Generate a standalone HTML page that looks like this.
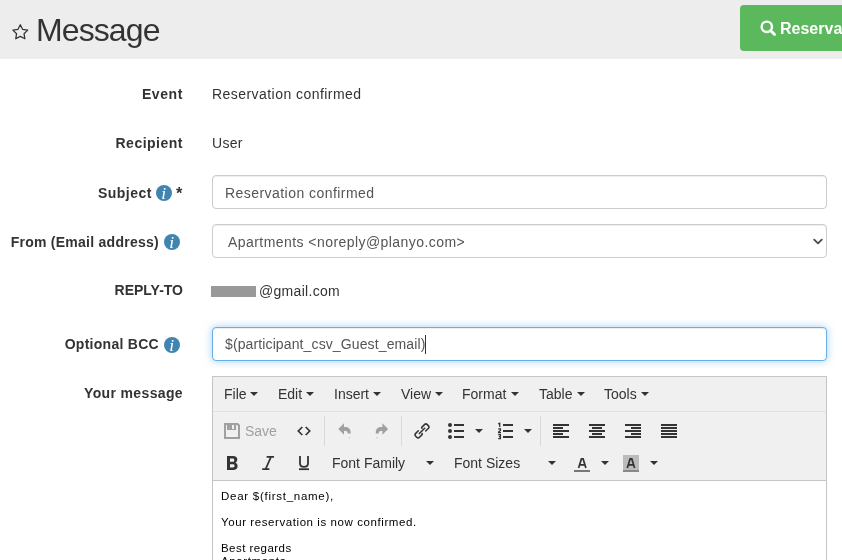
<!DOCTYPE html>
<html><head><meta charset="utf-8">
<style>
html,body{will-change:transform;margin:0;padding:0;background:#fff;width:842px;height:560px;overflow:hidden;position:relative;font-family:"Liberation Sans",sans-serif;color:#333;}
.a{position:absolute;white-space:nowrap;}
#hdr{left:0;top:0;width:842px;height:59px;background:#ededed;}
#title{left:36px;top:12px;font-size:32px;line-height:36px;color:#333;letter-spacing:-0.9px;}
#btn{left:740px;top:5px;width:140px;height:46px;background:#5cb85c;border-radius:4px;}
#btntxt{left:780px;top:20px;font-size:16px;line-height:18px;font-weight:bold;color:#fff;}
.lbl{font-size:14px;font-weight:bold;line-height:16px;color:#333;}
.val{font-size:14px;line-height:16px;color:#333;letter-spacing:0.3px;}
.inp{left:212px;width:613px;height:32px;border:1px solid #ccc;border-radius:4px;background:#fff;box-shadow:inset 0 1px 1px rgba(0,0,0,.075);}
.info{width:16px;height:16px;}
#ed{left:212px;top:376px;width:613px;height:200px;border:1px solid #c5c5c5;background:#fff;}
#menubar{left:213px;top:377px;width:613px;height:34px;background:#f0f0f0;border-bottom:1px solid #e2e2e2;}
#toolbar{left:213px;top:412px;width:613px;height:68px;background:#f0f0f0;border-bottom:1px solid #c5c5c5;}
.mi{font-size:14px;line-height:16px;color:#333;}
.caret{width:0;height:0;border-left:4px solid transparent;border-right:4px solid transparent;border-top:4px solid #333;}
.sep{width:1px;height:30px;background:#d9d9d9;}
.ct{font-size:11.5px;line-height:13px;color:#000;letter-spacing:0.62px;}
</style></head><body>
<div id="hdr" class="a"></div>
<svg class="a" style="left:12px;top:23px" width="17" height="18" viewBox="0 0 17 18"><path d="M8.30 1.70 L10.59 6.34 L15.72 7.09 L12.01 10.71 L12.88 15.81 L8.30 13.40 L3.72 15.81 L4.59 10.71 L0.88 7.09 L6.01 6.34 Z" fill="none" stroke="#333" stroke-width="1.25" stroke-linejoin="round"/></svg>
<div id="title" class="a">Message</div>
<div id="btn" class="a"></div>
<svg class="a" style="left:760px;top:20px" width="17" height="17" viewBox="0 0 17 17"><circle cx="6.8" cy="6.8" r="5.2" fill="none" stroke="#fff" stroke-width="2.4"/><path d="M10.5 10.5 L14.6 14.6" stroke="#fff" stroke-width="2.8" stroke-linecap="round"/></svg>
<div id="btntxt" class="a">Reservations</div>

<div class="a lbl" style="right:659px;top:86px;letter-spacing:0.6px">Event</div>
<div class="a val" style="left:212px;top:86px;letter-spacing:0.45px">Reservation confirmed</div>

<div class="a lbl" style="right:659px;top:135px;letter-spacing:0.5px">Recipient</div>
<div class="a val" style="left:212px;top:135px">User</div>

<div class="a lbl" style="right:690px;top:185px;letter-spacing:0.5px">Subject</div>
<svg class="a info" style="left:156px;top:185px" viewBox="0 0 16 16"><circle cx="8" cy="8" r="8" fill="#4085b0"/><text x="7.7" y="14.2" font-family="Liberation Serif" font-style="italic" font-size="17.5" fill="#fff" text-anchor="middle">i</text></svg>
<div class="a lbl" style="left:176px;top:185px;font-size:16.5px">*</div>
<div class="a inp" style="top:175px"></div>
<div class="a val" style="left:225px;top:185px;color:#555;letter-spacing:0.45px">Reservation confirmed</div>

<div class="a lbl" style="right:683px;top:234px;letter-spacing:0.26px">From (Email address)</div>
<svg class="a info" style="left:164px;top:234px" viewBox="0 0 16 16"><circle cx="8" cy="8" r="8" fill="#4085b0"/><text x="7.7" y="14.2" font-family="Liberation Serif" font-style="italic" font-size="17.5" fill="#fff" text-anchor="middle">i</text></svg>
<div class="a inp" style="top:224px"></div>
<div class="a val" style="left:228px;top:234px;color:#555;letter-spacing:0.44px">Apartments &lt;noreply@planyo.com&gt;</div>
<svg class="a" style="left:812px;top:237px" width="12" height="9" viewBox="0 0 12 9"><path d="M2.2 2.6 L6 6.4 L9.8 2.6" fill="none" stroke="#4a4a4a" stroke-width="1.8" stroke-linecap="round" stroke-linejoin="round"/></svg>

<div class="a lbl" style="right:659px;top:282px">REPLY-TO</div>
<div class="a" style="left:211px;top:286px;width:45px;height:11px;background:#999"></div>
<div class="a val" style="left:259px;top:283px;letter-spacing:0.3px">@gmail.com</div>

<div class="a lbl" style="right:683px;top:336px;letter-spacing:0.28px">Optional BCC</div>
<svg class="a info" style="left:164px;top:337px" viewBox="0 0 16 16"><circle cx="8" cy="8" r="8" fill="#4085b0"/><text x="7.7" y="14.2" font-family="Liberation Serif" font-style="italic" font-size="17.5" fill="#fff" text-anchor="middle">i</text></svg>
<div class="a inp" style="top:327px;border-color:#66afe9;box-shadow:inset 0 1px 1px rgba(0,0,0,.075),0 0 8px rgba(102,175,233,.6)"></div>
<div class="a val" style="left:225px;top:336px;color:#555;letter-spacing:0.12px">$(participant_csv_Guest_email)</div>
<div class="a" style="left:425px;top:335px;width:1px;height:19px;background:#333"></div>

<div class="a lbl" style="right:659px;top:385px;letter-spacing:0.36px">Your message</div>

<div id="ed" class="a"></div>
<div id="menubar" class="a"></div>
<div id="toolbar" class="a"></div>

<div class="a mi" style="left:224px;top:386px">File</div><div class="a caret" style="left:250px;top:392px"></div>
<div class="a mi" style="left:278px;top:386px">Edit</div><div class="a caret" style="left:306px;top:392px"></div>
<div class="a mi" style="left:334px;top:386px">Insert</div><div class="a caret" style="left:373px;top:392px"></div>
<div class="a mi" style="left:401px;top:386px">View</div><div class="a caret" style="left:435px;top:392px"></div>
<div class="a mi" style="left:462px;top:386px">Format</div><div class="a caret" style="left:511px;top:392px"></div>
<div class="a mi" style="left:539px;top:386px">Table</div><div class="a caret" style="left:577px;top:392px"></div>
<div class="a mi" style="left:604px;top:386px">Tools</div><div class="a caret" style="left:641px;top:392px"></div>


<svg class="a" style="left:0;top:0" width="842" height="560" viewBox="0 0 842 560">
<g fill="#d9d9d9"><rect x="324" y="416" width="1" height="30"/><rect x="401" y="416" width="1" height="30"/><rect x="540" y="416" width="1" height="30"/></g>
<path fill="#a0a0a0" fill-rule="evenodd" d="M224 423H238L240 425V439H224Z M226 425V437H238V426L237 425Z"/>
<rect x="227" y="425" width="9" height="5" fill="#a0a0a0"/><rect x="232" y="425" width="2" height="4" fill="#f0f0f0"/>
<path d="M302.3 427L298.3 431L302.3 435M305.7 427L309.7 431L305.7 435" fill="none" stroke="#333" stroke-width="1.7"/>
<path fill="#a0a0a0" d="M338.3 429L344 423.3V427H345C348.5 427 350.6 429 350.6 432V433.6H347.6V432.8C347.6 431.6 346.8 431 345 431H344V434.7Z"/><rect x="349" y="437" width="1" height="1.5" fill="#a0a0a0" opacity="0.5"/>
<path fill="#a0a0a0" d="M388.1 429L382.4 423.3V427H381.4C377.9 427 375.8 429 375.8 432V433.6H378.8V432.8C378.8 431.6 379.6 431 381.4 431H382.4V434.7Z"/><rect x="376.4" y="437" width="1" height="1.5" fill="#a0a0a0" opacity="0.5"/>
<g transform="translate(422 430.9) rotate(-45)" fill="none" stroke="#333" stroke-width="1.5" stroke-linecap="round" stroke-linejoin="round">
<path d="M-2.5 -2.7H-6.2Q-8.2 -2.7 -8.2 -0.7V0.7Q-8.2 2.7 -6.2 2.7H-2.6Q-1.8 2.7 -1.8 1.9"/><path d="M2.5 2.7H6.2Q8.2 2.7 8.2 0.7V-0.7Q8.2 -2.7 6.2 -2.7H2.6Q1.8 -2.7 1.8 -1.9"/><path d="M-3.8 0H3.8"/></g>
<g fill="#333">
<circle cx="450" cy="425" r="2"/><circle cx="450" cy="431" r="2"/><circle cx="450" cy="437" r="2"/>
<rect x="454" y="424" width="10" height="2"/><rect x="454" y="430" width="10" height="2"/><rect x="454" y="436" width="10" height="2"/>
<path d="M475 429H483L479 433Z"/>
<rect x="503" y="424" width="10" height="2"/><rect x="503" y="430" width="10" height="2"/><rect x="503" y="436" width="10" height="2"/>
<path d="M524 429H532L528 433Z"/>
<rect x="553" y="424" width="16" height="2"/><rect x="553" y="427" width="10" height="2"/><rect x="553" y="430" width="16" height="2"/><rect x="553" y="433" width="10" height="2"/><rect x="553" y="436" width="16" height="2"/>
<rect x="589" y="424" width="16" height="2"/><rect x="592" y="427" width="10" height="2"/><rect x="589" y="430" width="16" height="2"/><rect x="592" y="433" width="10" height="2"/><rect x="589" y="436" width="16" height="2"/>
<rect x="625" y="424" width="16" height="2"/><rect x="631" y="427" width="10" height="2"/><rect x="625" y="430" width="16" height="2"/><rect x="631" y="433" width="10" height="2"/><rect x="625" y="436" width="16" height="2"/>
<rect x="661" y="424" width="16" height="2"/><rect x="661" y="427" width="16" height="2"/><rect x="661" y="430" width="16" height="2"/><rect x="661" y="433" width="16" height="2"/><rect x="661" y="436" width="16" height="2"/>
</g>
<path d="M498.2 423.9L499.7 423.2V427M498.2 428.8H500.4V430.4L498.6 432V432.7H501M498.2 434.7H500.4V438.7H498.2M498.9 436.7H500.4" fill="none" stroke="#333" stroke-width="1.3" stroke-linejoin="miter"/>
<path fill="#333" fill-rule="evenodd" d="M227 456H233C236 456 237.3 457.5 237.3 459.5C237.3 461 236.5 462.3 235.3 462.8C236.8 463.3 237.6 464.6 237.6 466.3C237.6 468.7 236 470 233 470H227Z M230 458.5V461.8H232.5C233.7 461.8 234.3 461.2 234.3 460.2C234.3 459.1 233.7 458.5 232.5 458.5Z M230 464.2V467.5H232.8C234 467.5 234.6 466.9 234.6 465.8C234.6 464.8 234 464.2 232.8 464.2Z"/>
<path d="M266.6 456.8H274M262.2 469.2H269.4M271 456.8L265.6 469.2" fill="none" stroke="#333" stroke-width="1.7"/>
<path d="M300 456V463.2C300 465.6 301.8 466.8 304 466.8C306.2 466.8 308 465.6 308 463.2V456" fill="none" stroke="#333" stroke-width="1.8"/>
<rect x="299" y="468.3" width="10" height="1.8" fill="#333"/>
<path fill="#333" d="M426 461H434L430 465Z M601 461H609L605 465Z M650 461H658L654 465Z M548 461H556L552 465Z"/>
<path d="M578.6 468L581.4 458.9H583.1L585.9 468M580 464.8H584.5" fill="none" stroke="#333" stroke-width="1.7"/>
<rect x="574" y="470" width="16" height="2" fill="#777"/>
<rect x="623" y="455" width="16" height="17" fill="#bbb"/><rect x="623" y="470" width="16" height="2" fill="#888"/>
<path d="M627.3 468L630.1 458.9H631.8L634.6 468M628.7 464.8H633.2" fill="none" stroke="#333" stroke-width="1.7"/>
</svg>
<div class="a mi" style="left:245px;top:423px;color:#a0a0a0">Save</div>
<div class="a mi" style="left:332px;top:455px">Font Family</div>
<div class="a mi" style="left:454px;top:455px">Font Sizes</div>

<div class="a ct" style="left:221px;top:490px;letter-spacing:0.73px">Dear $(first_name),</div>
<div class="a ct" style="left:221px;top:516px;letter-spacing:0.58px">Your reservation is now confirmed.</div>
<div class="a ct" style="left:221px;top:542px;letter-spacing:0.45px">Best regards</div>
<div class="a ct" style="left:221px;top:555px">Apartments</div>
</body></html>
